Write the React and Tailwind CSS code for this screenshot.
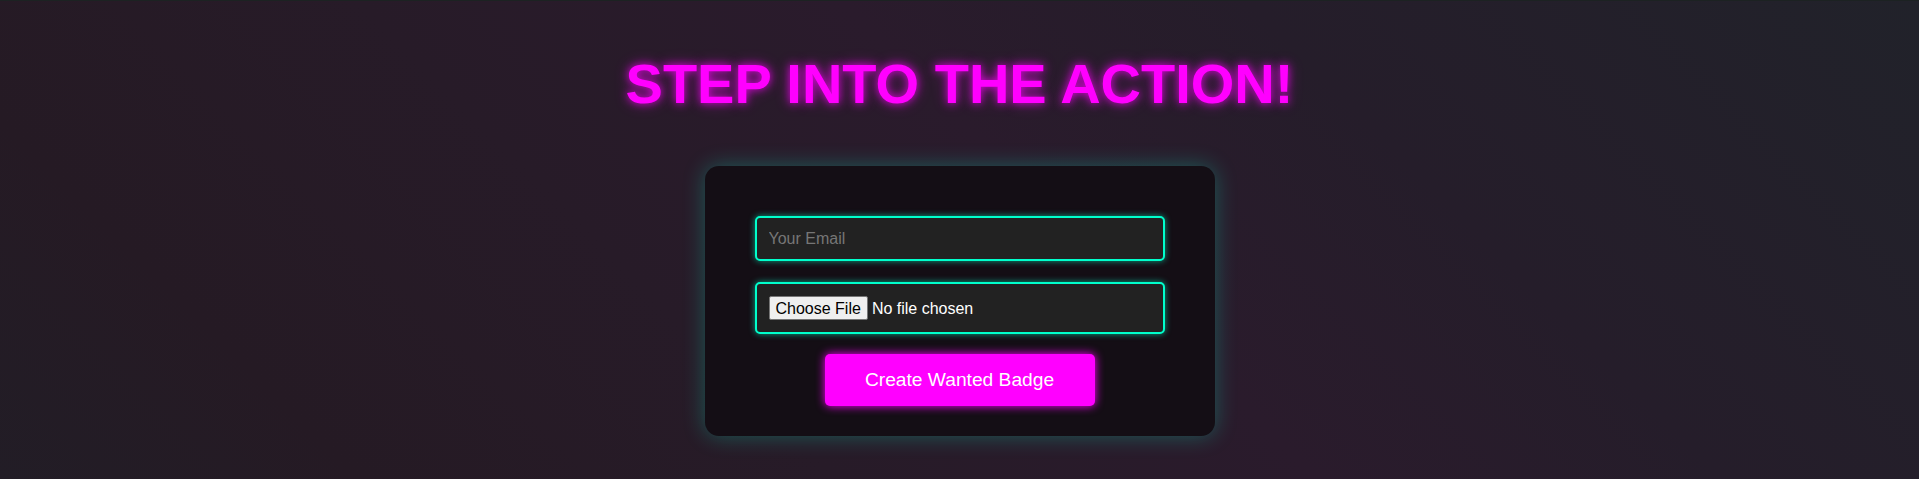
export default function App() {
  return (
    <div className="min-h-screen w-full border-t border-[#1c2222] bg-[linear-gradient(45deg,#221d26_0%,#251a24_15%,#271b28_35%,#2a1b2c_55%,#251d2a_72%,#21222a_100%)] pt-[55px] font-['Liberation_Sans',Arial,sans-serif]">
      <h1 className="text-center text-[56px] font-bold leading-none text-[#ff00ff] [text-shadow:0_0_8px_rgba(255,0,255,0.8),0_0_16px_rgba(255,0,255,0.3)]">
        STEP INTO THE ACTION!
      </h1>
      <div className="mx-auto mt-[54px] w-[510px] rounded-[14px] bg-[#140e15] px-[50px] pt-[50px] pb-[30px] shadow-[0_0_22px_rgba(0,255,204,0.28)]">
        <form className="flex flex-col items-center" onSubmit={(e) => e.preventDefault()}>
          <input
            type="email"
            placeholder="Your Email"
            className="h-[45px] w-full rounded-[5px] border-2 border-[#00ffcc] bg-[#222222] px-3 text-base text-white outline-none shadow-[0_0_6px_rgba(0,255,204,0.6)] placeholder:text-[#767676]"
          />
          <input
            type="file"
            className="mt-[21px] h-[52px] w-full rounded-[5px] border-2 border-[#00ffcc] bg-[#222222] px-3 py-3 text-base leading-[24px] text-white outline-none shadow-[0_0_6px_rgba(0,255,204,0.6)] file:mr-[4px] file:h-[24px] file:rounded-[2px] file:border file:border-[#767676] file:bg-[#efefef] file:px-[6px] file:text-black"
          />
          <button
            type="submit"
            className="mt-[20px] h-[52px] w-[270px] rounded-[5px] bg-[#ff00ff] text-[19.2px] text-white shadow-[0_0_10px_#ff00ff]"
          >
            Create Wanted Badge
          </button>
        </form>
      </div>
    </div>
  );
}
